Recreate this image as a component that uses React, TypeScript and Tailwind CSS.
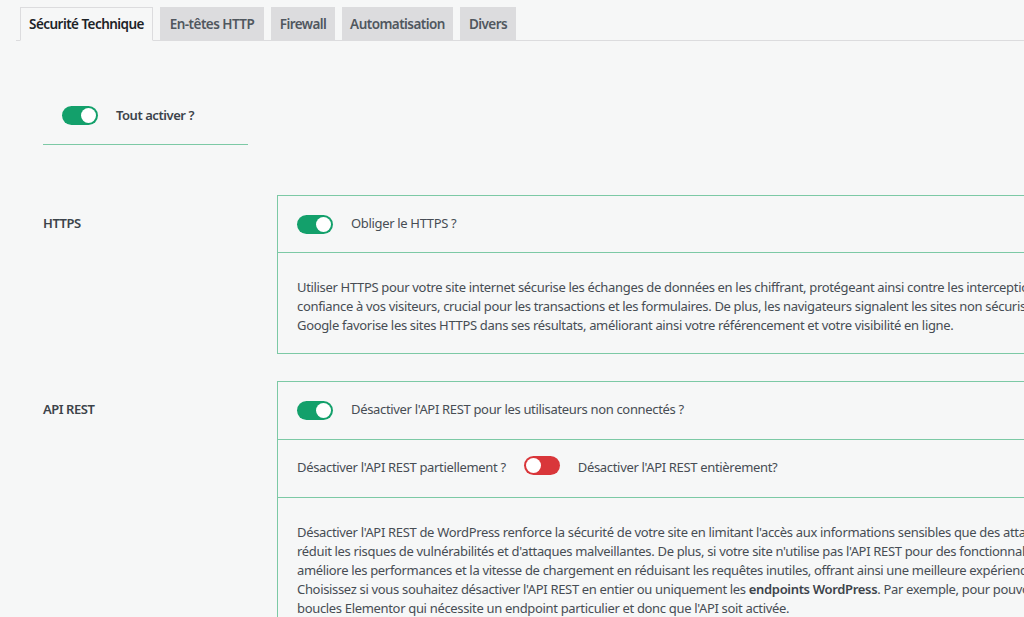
import React from 'react';

const tabs = [
  { label: 'Sécurité Technique', width: 'w-[133px]', active: true },
  { label: 'En-têtes HTTP', width: 'w-[104px]', active: false },
  { label: 'Firewall', width: 'w-[64px]', active: false },
  { label: 'Automatisation', width: 'w-[111px]', active: false },
  { label: 'Divers', width: 'w-[56px]', active: false },
];

const Toggle = ({ on, tone = 'green' }: { on: boolean; tone?: 'green' | 'red' }) => (
  <span
    className={`relative inline-flex h-[19px] w-[36px] shrink-0 items-center rounded-full ${
      tone === 'green' ? 'bg-[#13a06b]' : 'bg-[#d9363a]'
    }`}
  >
    <span
      className={`absolute top-[2px] h-[15px] w-[15px] rounded-full bg-white ${
        on ? 'right-[2px]' : 'left-[2px]'
      }`}
    />
  </span>
);

export default function App() {
  return (
    <div className="min-h-screen overflow-hidden bg-[#f6f7f7] pt-[7px] text-[13px] tracking-[-0.33px] text-[#474d54] [font-family:'Noto_Sans','Open_Sans',sans-serif]">
      {/* tabs */}
      <div className="ml-[16px] flex gap-[7px] border-b border-[#dcdcde] pl-[4px]">
        {tabs.map((tab) => (
          <div
            key={tab.label}
            className={`-mb-px flex h-[34px] items-center justify-center border border-[#dcdcde] text-[13.5px] font-semibold ${
              tab.width
            } ${tab.active ? 'border-b-[#f6f7f7] bg-[#f6f7f7] text-[#1d2327]' : 'bg-[#dcdcde] text-[#50575e]'}`}
          >
            <span className="whitespace-nowrap tracking-[-0.55px]">{tab.label}</span>
          </div>
        ))}
      </div>

      {/* tout activer */}
      <div className="ml-[43px] mt-[65px] flex w-[205px] items-center gap-[18px] border-b border-[#7cc9a5] pb-[18px] pl-[19px]">
        <Toggle on />
        <span className="font-semibold tracking-[-0.45px] text-[#3c434a]">Tout activer ?</span>
      </div>

      {/* HTTPS */}
      <div className="mt-[50px] flex items-start">
        <div className="w-[277px] shrink-0 pl-[43px] pt-[19px] font-semibold leading-[18px] tracking-[-0.45px] text-[#3c434a]">HTTPS</div>
        <div className="w-[1000px] shrink-0 border border-[#7cc9a5]">
          <div className="flex h-[57px] items-center gap-[18px] border-b border-[#7cc9a5] pl-[19px] pt-[1px]">
            <Toggle on />
            <span>Obliger le HTTPS ?</span>
          </div>
          <p className="whitespace-nowrap px-[19px] pb-[18px] pt-[25px] leading-[19px]">
            Utiliser HTTPS pour votre site internet sécurise les échanges de données en les chiffrant, protégeant ainsi contre les interceptions. Il renforce la
            <br />
            confiance à vos visiteurs, crucial pour les transactions et les formulaires. De plus, les navigateurs signalent les sites non sécurisés et
            <br />
            Google favorise les sites HTTPS dans ses résultats, améliorant ainsi votre référencement et votre visibilité en ligne.
          </p>
        </div>
      </div>

      {/* API REST */}
      <div className="mt-[27px] flex items-start">
        <div className="w-[277px] shrink-0 pl-[43px] pt-[19px] font-semibold leading-[18px] tracking-[-0.45px] text-[#3c434a]">API REST</div>
        <div className="w-[1000px] shrink-0 border border-[#7cc9a5]">
          <div className="flex h-[58px] items-center gap-[18px] border-b border-[#7cc9a5] pl-[19px]">
            <Toggle on />
            <span>Désactiver l'API REST pour les utilisateurs non connectés ?</span>
          </div>
          <div className="flex h-[58px] items-center border-b border-[#7cc9a5] pl-[19px]">
            <span>Désactiver l'API REST partiellement ?</span>
            <span className="ml-[18px]">
              <Toggle on={false} tone="red" />
            </span>
            <span className="ml-[18px]">Désactiver l'API REST entièrement?</span>
          </div>
          <p className="whitespace-nowrap px-[19px] pb-[18px] pt-[25px] leading-[19px]">
            Désactiver l'API REST de WordPress renforce la sécurité de votre site en limitant l'accès aux informations sensibles que des attaquants pourraient exploiter. Cela
            <br />
            réduit les risques de vulnérabilités et d'attaques malveillantes. De plus, si votre site n'utilise pas l'API REST pour des fonctionnalités spécifiques, sa désactivation
            <br />
            améliore les performances et la vitesse de chargement en réduisant les requêtes inutiles, offrant ainsi une meilleure expérience utilisateur.
            <br />
            Choisissez si vous souhaitez désactiver l'API REST en entier ou uniquement les <strong className="font-semibold text-[#3c434a]">endpoints WordPress</strong>. Par exemple, pour pouvoir utiliser certaines
            <br />
            boucles Elementor qui nécessite un endpoint particulier et donc que l'API soit activée.
          </p>
        </div>
      </div>
    </div>
  );
}
